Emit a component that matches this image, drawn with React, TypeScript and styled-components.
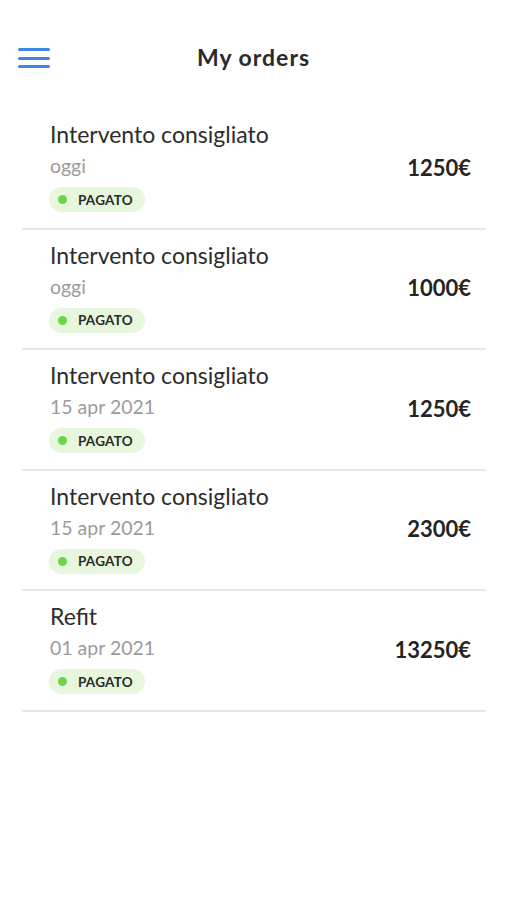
import React from "react";
import styled, { createGlobalStyle } from "styled-components";

const Global = createGlobalStyle`
  html, body { margin: 0; padding: 0; background: #fff; }
  body { font-family: "Lato", "Noto Sans", sans-serif; -webkit-font-smoothing: antialiased; }
`;

const Page = styled.div`
  width: 507px;
  min-height: 900px;
  background: #fff;
  display: flex;
  flex-direction: column;
`;

const Header = styled.header`
  position: relative;
  height: 109px;
  display: flex;
  align-items: flex-start;
  justify-content: center;
  padding-top: 43px;
  box-sizing: border-box;
`;

const MenuButton = styled.button`
  position: absolute;
  left: 18px;
  top: 47px;
  width: 32px;
  height: 22px;
  border: none;
  background: transparent;
  display: flex;
  flex-direction: column;
  justify-content: space-between;
  padding: 1px 0;
  box-sizing: border-box;
`;

const MenuLine = styled.span`
  display: block;
  height: 3px;
  border-radius: 2px;
  background: #3d83e8;
`;

const Title = styled.h1`
  margin: 0;
  font-size: 23px;
  line-height: 28px;
  font-weight: 700;
  letter-spacing: 1px;
  color: #2a2a2a;
`;

const List = styled.div`
  margin: 0 21px 0 22px;
  display: flex;
  flex-direction: column;
`;

const Row = styled.div`
  display: flex;
  align-items: center;
  justify-content: space-between;
  padding: 13px 15px 15.5px 28px;
  border-bottom: 2px solid #e6e6e6;
`;

const Info = styled.div`
  display: flex;
  flex-direction: column;
  align-items: flex-start;
`;

const OrderName = styled.div`
  font-size: 23px;
  line-height: 24px;
  color: #2c2c2c;
`;

const OrderDate = styled.div`
  margin-top: 8px;
  font-size: 19.5px;
  line-height: 24px;
  color: #9b9b9b;
`;

const Badge = styled.div`
  margin-top: 9px;
  height: 25px;
  box-sizing: border-box;
  padding: 0 12px 0 9px;
  margin-left: -1px;
  border-radius: 13px;
  background: #e6f7dd;
  display: flex;
  align-items: center;
  gap: 11px;
  font-size: 13.5px;
  font-weight: 700;
  color: #2a2a2a;
  letter-spacing: 0.2px;
`;

const Dot = styled.span`
  width: 9px;
  height: 9px;
  border-radius: 50%;
  background: #6fd34b;
`;

const Price = styled.div`
  font-size: 22px;
  font-weight: 700;
  color: #242424;
`;

const orders = [
  { name: "Intervento consigliato", date: "oggi", price: "1250€" },
  { name: "Intervento consigliato", date: "oggi", price: "1000€" },
  { name: "Intervento consigliato", date: "15 apr 2021", price: "1250€" },
  { name: "Intervento consigliato", date: "15 apr 2021", price: "2300€" },
  { name: "Refit", date: "01 apr 2021", price: "13250€" },
];

export default function App() {
  return (
    <Page>
      <Global />
      <Header>
        <MenuButton aria-label="menu">
          <MenuLine />
          <MenuLine />
          <MenuLine />
        </MenuButton>
        <Title>My orders</Title>
      </Header>
      <List>
        {orders.map((o, i) => (
          <Row key={i}>
            <Info>
              <OrderName>{o.name}</OrderName>
              <OrderDate>{o.date}</OrderDate>
              <Badge>
                <Dot />
                PAGATO
              </Badge>
            </Info>
            <Price>{o.price}</Price>
          </Row>
        ))}
      </List>
    </Page>
  );
}
